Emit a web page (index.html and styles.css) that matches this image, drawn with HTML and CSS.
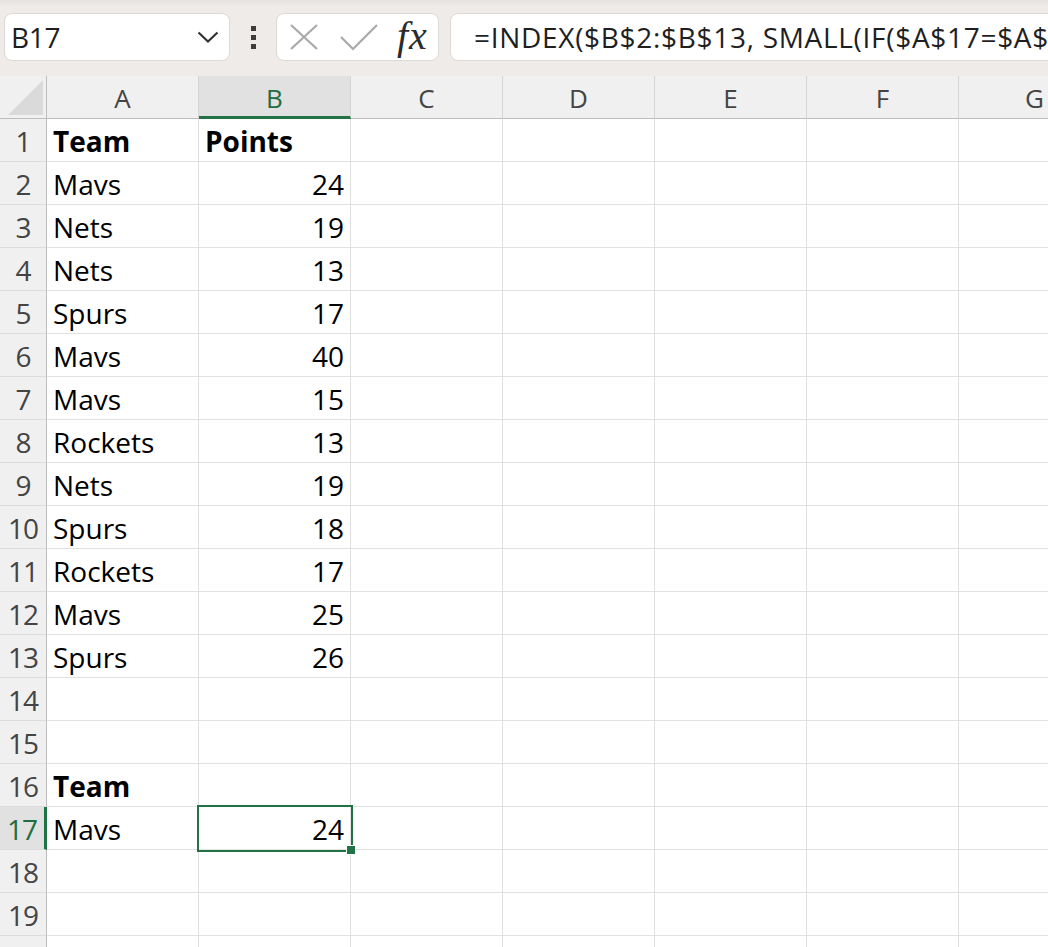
FILE: index.html
```html
<!DOCTYPE html>
<html>
<head>
<meta charset="utf-8">
<link rel="stylesheet" href="styles.css">
</head>
<body>
<div class="toolbar">
  <div class="namebox">
    <span class="namebox-text">B17</span>
    <svg class="chevron" width="22" height="12" viewBox="0 0 22 12"><path d="M1.5 1.5 L11 10.5 L20.5 1.5" fill="none" stroke="#333" stroke-width="2.2"/></svg>
  </div>
  <div class="dots"><span></span><span></span><span></span></div>
  <div class="fxbox">
    <svg class="icon-x" width="28" height="26" viewBox="0 0 28 26"><path d="M1 1 L27 25 M27 1 L1 25" stroke="#a9a9a9" stroke-width="2.2" fill="none"/></svg>
    <svg class="icon-check" width="38" height="27" viewBox="0 0 38 27"><path d="M1 13 L13 25 L37 1" stroke="#a9a9a9" stroke-width="2.2" fill="none"/></svg>
    <span class="fx">fx</span>
  </div>
  <div class="formula"><span class="formula-text">=INDEX($B$2:$B$13, SMALL(IF($A$17=$A$</span></div>
</div>

<div class="sheet">
  <div class="row head">
    <div class="corner"><span class="tri"></span></div>
    <div class="ch">A</div><div class="ch sel">B</div><div class="ch">C</div><div class="ch">D</div><div class="ch">E</div><div class="ch">F</div><div class="ch">G</div>
  </div>
  <div class="row"><div class="rh">1</div><div class="c b">Team</div><div class="c b">Points</div><div class="c"></div><div class="c"></div><div class="c"></div><div class="c"></div><div class="c"></div></div>
  <div class="row"><div class="rh">2</div><div class="c">Mavs</div><div class="c n">24</div><div class="c"></div><div class="c"></div><div class="c"></div><div class="c"></div><div class="c"></div></div>
  <div class="row"><div class="rh">3</div><div class="c">Nets</div><div class="c n">19</div><div class="c"></div><div class="c"></div><div class="c"></div><div class="c"></div><div class="c"></div></div>
  <div class="row"><div class="rh">4</div><div class="c">Nets</div><div class="c n">13</div><div class="c"></div><div class="c"></div><div class="c"></div><div class="c"></div><div class="c"></div></div>
  <div class="row"><div class="rh">5</div><div class="c">Spurs</div><div class="c n">17</div><div class="c"></div><div class="c"></div><div class="c"></div><div class="c"></div><div class="c"></div></div>
  <div class="row"><div class="rh">6</div><div class="c">Mavs</div><div class="c n">40</div><div class="c"></div><div class="c"></div><div class="c"></div><div class="c"></div><div class="c"></div></div>
  <div class="row"><div class="rh">7</div><div class="c">Mavs</div><div class="c n">15</div><div class="c"></div><div class="c"></div><div class="c"></div><div class="c"></div><div class="c"></div></div>
  <div class="row"><div class="rh">8</div><div class="c">Rockets</div><div class="c n">13</div><div class="c"></div><div class="c"></div><div class="c"></div><div class="c"></div><div class="c"></div></div>
  <div class="row"><div class="rh">9</div><div class="c">Nets</div><div class="c n">19</div><div class="c"></div><div class="c"></div><div class="c"></div><div class="c"></div><div class="c"></div></div>
  <div class="row"><div class="rh">10</div><div class="c">Spurs</div><div class="c n">18</div><div class="c"></div><div class="c"></div><div class="c"></div><div class="c"></div><div class="c"></div></div>
  <div class="row"><div class="rh">11</div><div class="c">Rockets</div><div class="c n">17</div><div class="c"></div><div class="c"></div><div class="c"></div><div class="c"></div><div class="c"></div></div>
  <div class="row"><div class="rh">12</div><div class="c">Mavs</div><div class="c n">25</div><div class="c"></div><div class="c"></div><div class="c"></div><div class="c"></div><div class="c"></div></div>
  <div class="row"><div class="rh">13</div><div class="c">Spurs</div><div class="c n">26</div><div class="c"></div><div class="c"></div><div class="c"></div><div class="c"></div><div class="c"></div></div>
  <div class="row"><div class="rh">14</div><div class="c"></div><div class="c"></div><div class="c"></div><div class="c"></div><div class="c"></div><div class="c"></div><div class="c"></div></div>
  <div class="row"><div class="rh">15</div><div class="c"></div><div class="c"></div><div class="c"></div><div class="c"></div><div class="c"></div><div class="c"></div><div class="c"></div></div>
  <div class="row"><div class="rh">16</div><div class="c b">Team</div><div class="c"></div><div class="c"></div><div class="c"></div><div class="c"></div><div class="c"></div><div class="c"></div></div>
  <div class="row"><div class="rh sel">17</div><div class="c">Mavs</div><div class="c n active">24<span class="handle"></span></div><div class="c"></div><div class="c"></div><div class="c"></div><div class="c"></div><div class="c"></div></div>
  <div class="row"><div class="rh">18</div><div class="c"></div><div class="c"></div><div class="c"></div><div class="c"></div><div class="c"></div><div class="c"></div><div class="c"></div></div>
  <div class="row"><div class="rh">19</div><div class="c"></div><div class="c"></div><div class="c"></div><div class="c"></div><div class="c"></div><div class="c"></div><div class="c"></div></div>
  <div class="row"><div class="rh"></div><div class="c"></div><div class="c"></div><div class="c"></div><div class="c"></div><div class="c"></div><div class="c"></div><div class="c"></div></div>
</div>
</body>
</html>
```

FILE: styles.css
```css
html, body {
  margin: 0;
  padding: 0;
  width: 1048px;
  height: 947px;
  overflow: hidden;
  background: #ffffff;
  font-family: "Open Sans", "Noto Sans", sans-serif;
}

.toolbar {
  height: 76px;
  box-sizing: border-box;
  background: linear-gradient(#e6e2df 0px, #efebe8 6px, #efebe8 100%);
  display: flex;
  align-items: flex-start;
  padding: 13px 0 0 4px;
  white-space: nowrap;
  overflow: hidden;
}

.namebox {
  width: 226px;
  height: 48px;
  flex: none;
  box-sizing: border-box;
  background: #fff;
  border: 1px solid #dcd9d6;
  border-radius: 8px;
  display: flex;
  align-items: center;
  justify-content: space-between;
  padding: 0 10px 0 6px;
}

.namebox-text {
  font-size: 28px;
  color: #1f1f1f;
  letter-spacing: -0.3px;
}

.dots {
  width: 46px;
  flex: none;
  height: 48px;
  display: flex;
  flex-direction: column;
  align-items: center;
  justify-content: center;
  gap: 4px;
}

.dots span {
  width: 5px;
  height: 5px;
  background: #3d3d3d;
}

.fxbox {
  width: 163px;
  height: 48px;
  flex: none;
  box-sizing: border-box;
  background: #fff;
  border: 1px solid #dcd9d6;
  border-radius: 8px;
  display: flex;
  align-items: center;
  padding: 0 0 0 13px;
}

.icon-x {
  flex: none;
}

.icon-check {
  flex: none;
  margin-left: 22px;
}

.fx {
  font-family: "Liberation Serif", "DejaVu Serif", serif;
  font-style: italic;
  font-size: 40px;
  color: #2b2b2b;
  margin-left: 19px;
  margin-top: -4px;
  letter-spacing: 1px;
}

.formula {
  flex: none;
  margin-left: 11px;
  width: 700px;
  height: 48px;
  box-sizing: border-box;
  background: #fff;
  border: 1px solid #dcd9d6;
  border-radius: 8px;
  padding-left: 23px;
  overflow: hidden;
}

.formula-text {
  font-size: 28px;
  line-height: 46px;
  color: #1f1f1f;
  letter-spacing: 0.7px;
}

.sheet {
  width: 1111px;
}

.row {
  display: grid;
  grid-template-columns: 47px repeat(7, 152px);
  height: 43px;
}

.row > div {
  box-sizing: border-box;
  border-right: 1px solid #e1e1e1;
  border-bottom: 1px solid #e1e1e1;
  height: 43px;
}

.head > div {
  background: #f0f0f0;
  border-bottom: 1px solid #bdbdbd;
  border-right: 1px solid #d4d4d4;
}

.corner {
  position: relative;
}

.head .corner {
  border-right: 1px solid #bdbdbd;
}

.tri {
  position: absolute;
  right: 3px;
  bottom: 3px;
  width: 0;
  height: 0;
  border-left: 35px solid transparent;
  border-bottom: 35px solid #dadada;
}

.ch {
  font-size: 26px;
  color: #444;
  text-align: center;
  line-height: 44px;
}

.head .ch.sel {
  background: #e1e1e1;
  color: #1e6e41;
  border-bottom: 3px solid #217346;
}

.row > .rh {
  background: #f0f0f0;
  border-right: 1px solid #bdbdbd;
  border-bottom: 1px solid #dcdcdc;
  font-size: 28px;
  color: #444;
  text-align: center;
  line-height: 44px;
  letter-spacing: -1px;
}

.row > .rh.sel {
  background: #e1e1e1;
  color: #1e6e41;
  border-right: 3px solid #217346;
}

.c {
  font-size: 28px;
  color: #000;
  line-height: 44px;
  padding: 0 6px;
  white-space: nowrap;
}

.c.b {
  font-weight: 700;
}

.c.n {
  text-align: right;
}

.row > .c.active {
  position: relative;
  outline: 2px solid #217346;
  outline-offset: 0px;
  z-index: 2;
}

.handle {
  position: absolute;
  right: -6px;
  bottom: -6px;
  width: 8px;
  height: 8px;
  background: #217346;
  border: 1px solid #fff;
}
```
